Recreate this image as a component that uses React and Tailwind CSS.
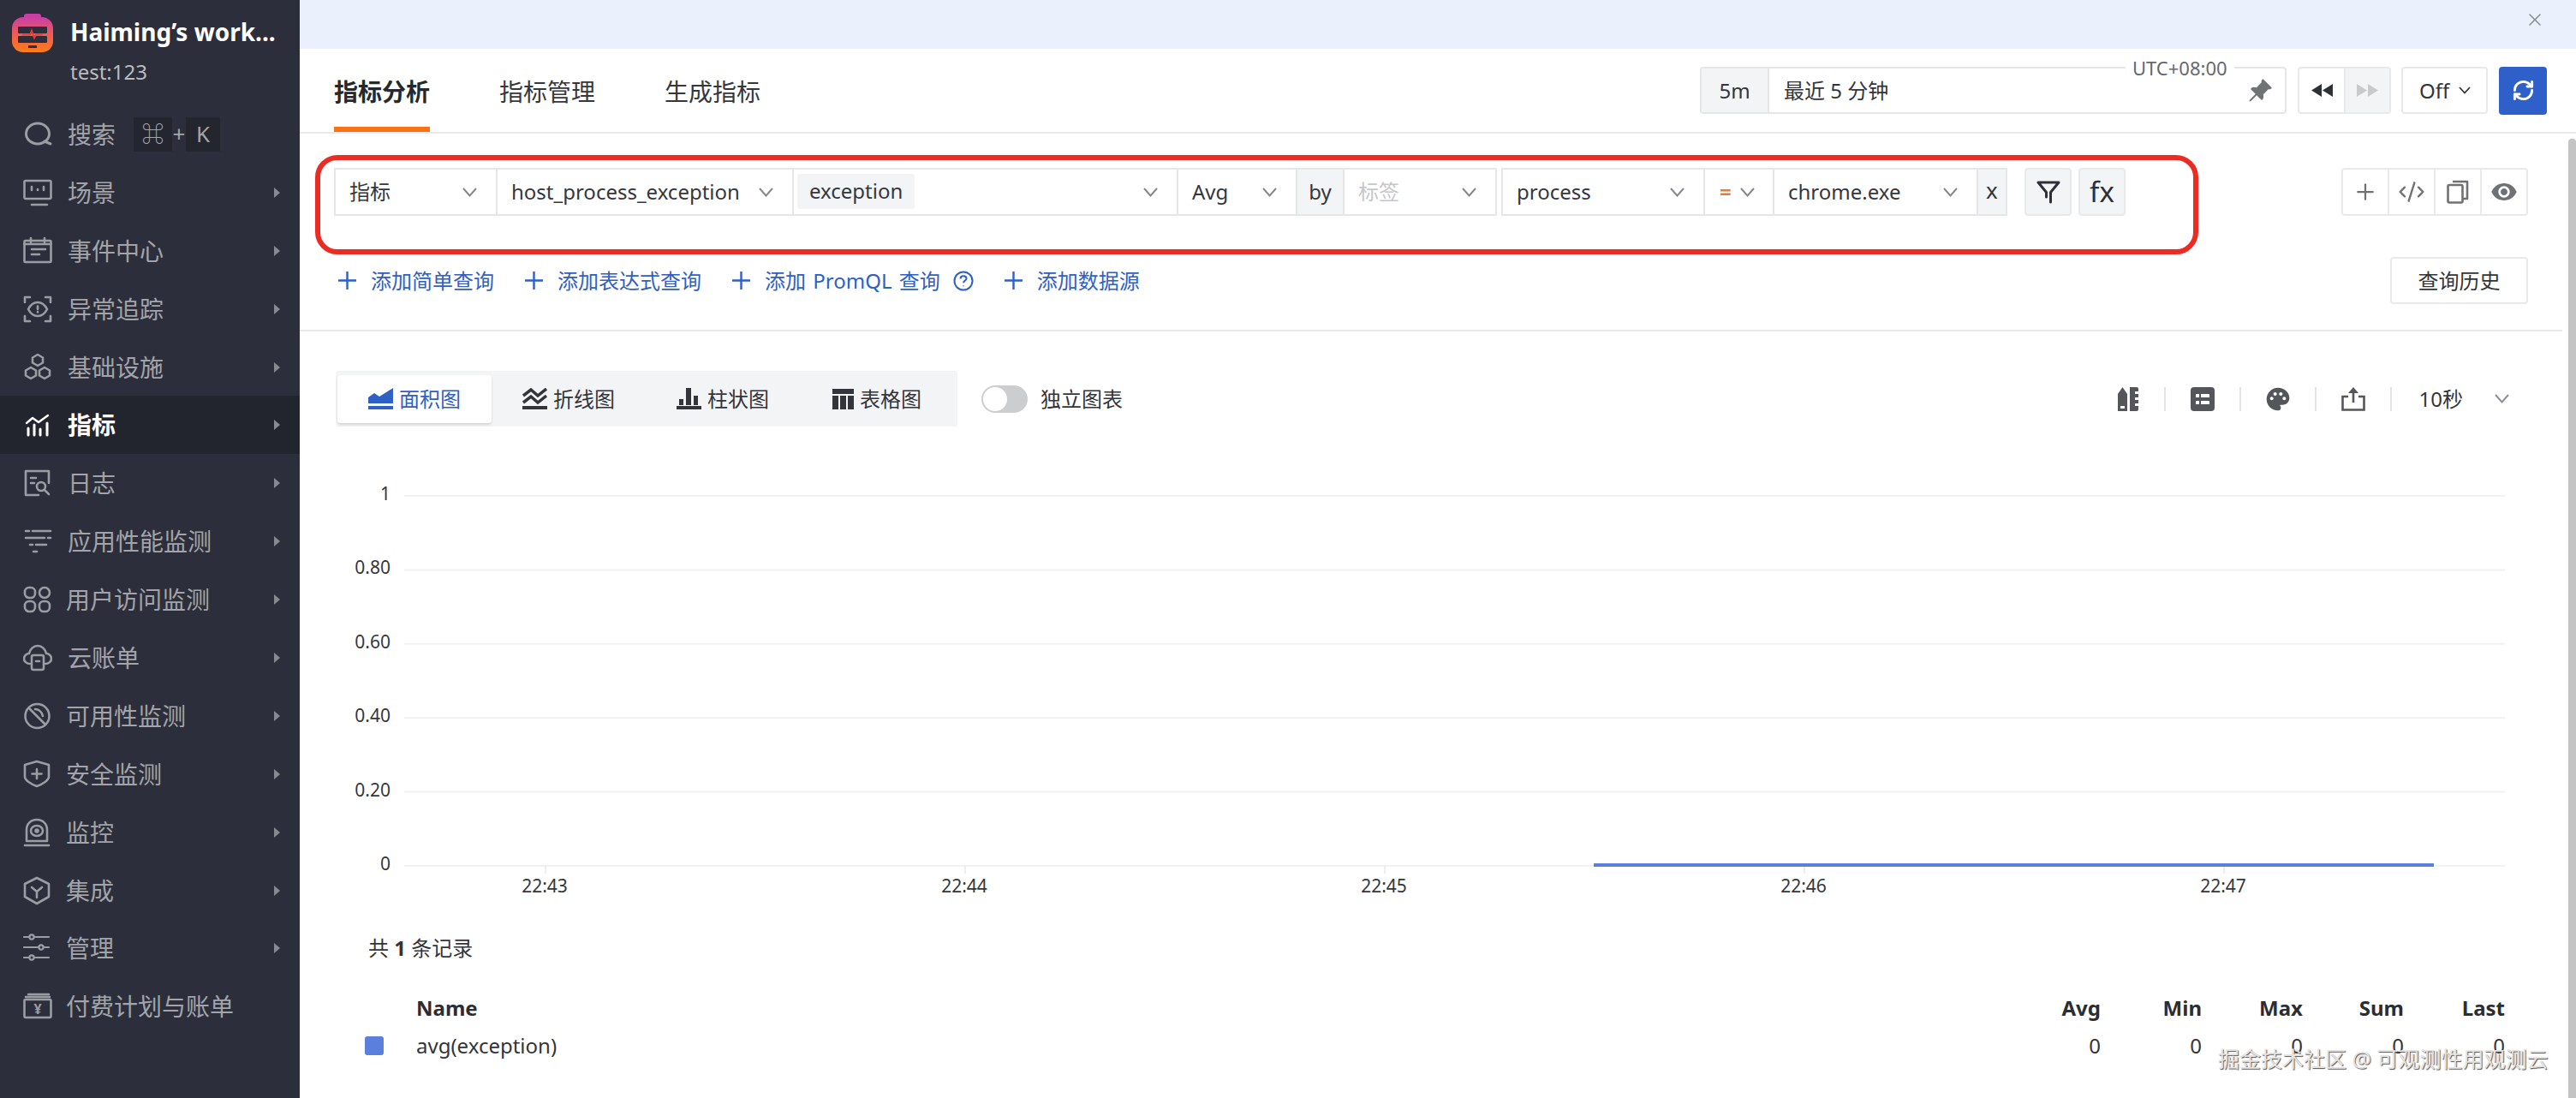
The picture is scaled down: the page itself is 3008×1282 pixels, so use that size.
import React from "react";
import { Plus, CodeXml, RefreshCw, X } from "lucide-react";
import { BsPinAngleFill } from "react-icons/bs";
import { MdVisibility, MdPalette } from "react-icons/md";

const I = ({ children, w = 34, h = 34, vb = "0 0 34 34", sw = 2.6 }) => (
  <svg width={w} height={h} viewBox={vb} fill="none" stroke="currentColor" strokeWidth={sw} strokeLinecap="round" strokeLinejoin="round">{children}</svg>
);

const icons = {
  search: <I sw={3}><ellipse cx="17" cy="16" rx="13.5" ry="12" /><path d="M25 25l7 3" /></I>,
  scene: <I><rect x="1.5" y="3" width="31" height="21" rx="1.5" /><path d="M10 31h18M10 10v4M24 10v4M17 13v1" /></I>,
  event: <I><rect x="1.5" y="5" width="31" height="25" rx="1" /><path d="M9 2v5M25 2v5M1.5 9h31M10 15h16M10 21h9" /></I>,
  anomaly: <I><path d="M2 9V3h6M26 3h6v6M2 25v6h6M32 25v6h-6" /><path d="M6 17c3-6 7-8 11-8s8 2 11 8c-3 6-7 8-11 8s-8-2-11-8z" /><path d="M17 13.5v3.5M17 20v.5" /></I>,
  infra: <I><path d="M17 2l6 3.5v6L17 15l-6-3.5v-6zM9 17l6 3.5v6L9 30l-6-3.5v-6zM25 17l6 3.500v6L25 30l-6-3.500v-6z" /></I>,
  metric: <I sw={3}><path d="M4 15l7-6 7 5 11-8" strokeWidth="2.4" /><path d="M6 21v8M13 17v12M20 22v7M28 15v14" /></I>,
  log: <I><path d="M18 31H3V3h27v14" /><path d="M9 11h6M9 17h4" /><circle cx="21" cy="21" r="5" /><path d="M25 25l5 5" /></I>,
  apm: <I><path d="M3 5h4M11 5h21M3 13h22M29 13h3M8 21h3M15 21h12M12 29h4" /></I>,
  rum: <I><rect x="2" y="3" width="12" height="12" rx="5" /><rect x="19" y="3" width="12" height="12" rx="6" /><rect x="2" y="19" width="12" height="12" rx="5" /><rect x="19" y="19" width="12" height="12" rx="5" /></I>,
  cloud: <I><path d="M8 24c-4 0-7-3-7-6s3-6 6-6c1-5 5-9 10-9s9 4 10 9c3 0 6 3 6 6s-3 6-7 6" /><rect x="10" y="14" width="14" height="17" rx="2" /><path d="M15 21h4" /></I>,
  avail: <I><circle cx="16.5" cy="17" r="14" /><path d="M7 8l19 19" /><path d="M14 9c4 0 8 3 9 8" /></I>,
  security: <I><path d="M16 2l14 4v14c0 4-8 9-14 11C10 29 2 24 2 20V6z" /><path d="M16 11v11M10.500 16.500h11" /></I>,
  monitor: <I><path d="M4 27V14C4 7 9 2 16 2s12 5 12 12v13z" /><ellipse cx="16" cy="15" rx="7" ry="6" /><circle cx="16" cy="15" r="1.500" /><path d="M2 32h28" /></I>,
  integ: <I><path d="M16 2l14 7v15l-14 8-14-8V9z" /><path d="M10 13l6 5 6-5M16 18v7" /></I>,
  manage: <I sw={2.2}><path d="M1 4h29M1 16h29M1 28h29" /><circle cx="10" cy="4" r="2.600" fill="#2c2f3b" /><circle cx="21" cy="16" r="2.600" fill="#2c2f3b" /><circle cx="10" cy="28" r="2.600" fill="#2c2f3b" /></I>,
  billing: <I><path d="M6 3h24M3 6h28" /><rect x="1.500" y="9" width="31" height="21" rx="1.500" /><text x="17" y="26" textAnchor="middle" fontSize="16" fontWeight="700" fill="currentColor" stroke="none">¥</text></I>,
};

const nav = [
  ["scene", "场景", "gap-[18px]"],
  ["event", "事件中心", "gap-[18px]"],
  ["anomaly", "异常追踪", "gap-[18px]"],
  ["infra", "基础设施", "gap-[18px]"],
  ["metric", "指标", "gap-[18px]", true],
  ["log", "日志", "gap-[18px]"],
  ["apm", "应用性能监测", "gap-[18px]"],
  ["rum", "用户访问监测", "gap-[16px]"],
  ["cloud", "云账单", "gap-[18px]"],
  ["avail", "可用性监测", "gap-[16px]"],
  ["security", "安全监测", "gap-[16px]"],
  ["monitor", "监控", "gap-[16px]"],
  ["integ", "集成", "gap-[16px]"],
  ["manage", "管理", "gap-[16px]"],
  ["billing", "付费计划与账单", "gap-[16px]", false, true],
];

const Logo = () => (
  <svg width="48" height="45" viewBox="0 0 48 45">
    <defs>
      <linearGradient id="lg" x1="0" y1="0" x2="0" y2="1">
        <stop offset="0" stopColor="#c93fa8" />
        <stop offset="0.55" stopColor="#f2604a" />
        <stop offset="1" stopColor="#ff7d17" />
      </linearGradient>
    </defs>
    <rect x="14" y="0" width="20" height="7" rx="3" fill="#c93fa8" />
    <rect x="0" y="4" width="48" height="41" rx="13" fill="url(#lg)" />
    <rect x="7" y="15" width="34" height="8" rx="1" fill="#2c2f3b" />
    <rect x="7" y="26" width="34" height="8" rx="1" fill="#2c2f3b" />
    <path d="M12 24.500h9l2-5 3 9 2-4h8" fill="none" stroke="#f0392f" strokeWidth="1.800" />
    <rect x="19" y="37" width="10" height="3" fill="#2c2f3b" />
  </svg>
);

const NavRow = ({ icon, label, gap, active, noArrow }) => (
  <div className={`h-[67.9px] flex items-center pl-[27px] pr-[23px] ${gap} ${active ? "bg-[#22252d] text-white font-bold" : "text-[#a2a4aa]"}`}>
    <span className={`w-[34px] h-[34px] flex items-center justify-center shrink-0 ${active ? "text-white" : "text-[#9b9da4]"}`}>{icons[icon]}</span>
    <span className="text-[28px] leading-[40px] whitespace-nowrap">{label}</span>
    {!noArrow && (
      <svg className="ml-auto" width="7" height="12" viewBox="0 0 7 12"><path d="M0 0l7 6-7 6z" fill="#878a92" /></svg>
    )}
  </div>
);

const Sidebar = () => (
  <aside className="w-[350px] shrink-0 bg-[#2c2f3b] h-full overflow-hidden">
    <div className="h-[123px] flex items-start pl-[14px] pt-[16px]">
      <Logo />
      <div className="ml-[20px]">
        <div className="text-[28px] leading-[40px] font-bold text-white whitespace-nowrap mt-[1px]">Haiming’s work...</div>
        <div className="text-[24px] leading-[34px] text-[#b9bbc0] mt-[10px]">test:123</div>
      </div>
    </div>
    <div className="h-[67.9px] flex items-center pl-[27px] gap-[18px] text-[#a2a4aa]">
      <span className="w-[34px] h-[34px] flex items-center justify-center text-[#9b9da4]">{icons.search}</span>
      <span className="text-[28px] leading-[40px] whitespace-nowrap">搜索</span>
      <div className="flex items-center ml-[3px] text-[26px]">
        <span className="w-[45px] h-[40px] bg-[#23262f] flex items-center justify-center">⌘</span>
        <span className="w-[16px] text-center">+</span>
        <span className="w-[40px] h-[40px] bg-[#23262f] flex items-center justify-center">K</span>
      </div>
    </div>
    {nav.map(([icon, label, gap, active, noArrow]) => (
      <NavRow key={label} icon={icon} label={label} gap={gap} active={active} noArrow={noArrow} />
    ))}
  </aside>
);

const Chev = ({ cls = "" }) => (
  <svg className={`shrink-0 ${cls}`} width="17" height="11" viewBox="0 0 17 11" fill="none" stroke="#85878c" strokeWidth="2"><path d="M1 1l7.500 8.500L16 1" /></svg>
);

const Cell = ({ w, children, cls = "", pl = "pl-[16px]" }) => (
  <div className={`${w} ${pl} ${cls} h-[56px] shrink-0 border-2 border-[#e5e6e8] -ml-[2px] first:ml-0 flex items-center pr-[22px] text-[24px] text-[#35373c] whitespace-nowrap bg-white`}>
    {children}
  </div>
);

const QueryRow = () => (
  <div className="flex items-center">
    <Cell w="w-[191px]"><span>指标</span><Chev cls="ml-auto" /></Cell>
    <Cell w="w-[348px]"><span>host_process_exception</span><Chev cls="ml-auto" /></Cell>
    <Cell w="w-[451px]" pl="pl-[4px]">
      <span className="h-[41px] px-[14px] bg-[#f3f4f6] rounded-[3px] flex items-center -mt-[2px]">exception</span>
      <Chev cls="ml-auto" />
    </Cell>
    <Cell w="w-[141px]"><span>Avg</span><Chev cls="ml-auto" /></Cell>
    <Cell w="w-[57px]" cls="!bg-[#f3f4f6] justify-center !pr-0" pl="pl-0">by</Cell>
    <Cell w="w-[180px]" cls="!text-[#c6c7c9]"><span>标签</span><Chev cls="ml-auto" /></Cell>
    <div className="w-[7px] shrink-0" />
    <Cell w="w-[238px]"><span>process</span><Chev cls="ml-auto" /></Cell>
    <Cell w="w-[83px]" cls="!pr-0" pl="pl-[17px]"><span className="text-[#e87c35] font-bold">=</span><Chev cls="ml-[10px]" /></Cell>
    <Cell w="w-[240px]"><span>chrome.exe</span><Chev cls="ml-auto" /></Cell>
    <Cell w="w-[36px]" cls="!bg-[#f3f4f6] justify-center !pr-0 !text-[26px]" pl="pl-0"><span className="leading-[28px] -mt-[4px]">x</span></Cell>
    <button className="ml-[20px] w-[55px] h-[56px] border-2 border-[#e8e9eb] bg-[#f3f4f6] rounded-[4px] flex items-center justify-center text-[#2d3036]">
      <svg width="28" height="28" viewBox="0 0 28 28" fill="none" stroke="currentColor" strokeWidth="3" strokeLinejoin="round" strokeLinecap="round"><path d="M2 3h24l-9.500 11.500V26M2 3l9.500 11.500V20" /></svg>
    </button>
    <button className="ml-[8px] w-[55px] h-[56px] border-2 border-[#e8e9eb] bg-[#f3f4f6] rounded-[4px] flex items-center justify-center text-[33px] leading-[40px] text-[#2d3036]">fx</button>
  </div>
);

const Tool = ({ children, cls = "" }) => (
  <div className={`w-[56px] h-[56px] border-2 border-[#e8e9eb] -ml-[2px] first:ml-0 first:rounded-l-[4px] last:rounded-r-[4px] flex items-center justify-center text-[#6f7174] ${cls}`}>{children}</div>
);

const AddLink = ({ label, help }) => (
  <div className="flex items-center text-[#2f60c4] text-[24px] whitespace-nowrap [word-spacing:2px]">
    <svg width="21" height="21" viewBox="0 0 21 21" fill="none" stroke="currentColor" strokeWidth="2.400"><path d="M10.500 0v21M0 10.500h21" /></svg>
    <span className="ml-[17px]">{label}</span>
    {help && (
      <svg className="ml-[15px]" width="24" height="24" viewBox="0 0 24 24" fill="none" stroke="currentColor" strokeWidth="2">
        <circle cx="12" cy="12" r="10.500" />
        <path d="M8.500 9.500c0-2 1.500-3.200 3.500-3.200s3.500 1.200 3.500 3c0 2.500-3.500 2.500-3.500 5" />
        <path d="M12 17.500v.8" />
      </svg>
    )}
  </div>
);

const AreaIcon = () => (
  <svg width="29" height="25" viewBox="0 0 29 25" fill="currentColor"><path d="M0 18V11l7-5 6 4 16-10v18z" /><rect y="21" width="29" height="4" /></svg>
);
const LineIcon = () => (
  <svg width="29" height="25" viewBox="0 0 29 25" fill="none" stroke="currentColor" strokeWidth="3.500"><path d="M1 9l9-7 8 7 10-8M1 17l9-7 8 7 10-8" /><rect x="0" y="21" width="29" height="4" fill="currentColor" stroke="none" /></svg>
);
const BarIcon = () => (
  <svg width="29" height="25" viewBox="0 0 29 25" fill="currentColor"><rect x="3" y="13" width="5" height="7" /><rect x="11" y="0" width="6" height="20" /><rect x="20" y="9" width="5" height="11" /><rect y="21" width="29" height="4" /></svg>
);
const TableIcon = () => (
  <svg width="25" height="24" viewBox="0 0 25 24" fill="currentColor"><rect width="25" height="6" /><rect y="8" width="7" height="16" /><rect x="9" y="8" width="7" height="16" /><rect x="18" y="8" width="7" height="16" /></svg>
);

const ChartTab = ({ icon, label, active }) => (
  <div className={`w-[180px] h-[56px] rounded-[4px] flex items-center justify-center gap-[7px] text-[24px] whitespace-nowrap ${active ? "bg-white text-[#2f60c4] shadow-[0_2px_3px_rgba(0,0,0,0.12)]" : "text-[#33353a]"}`}>
    {icon}
    <span>{label}</span>
  </div>
);

const Sep = () => <span className="w-[2px] h-[28px] bg-[#e3e4e6]" />;

const RulerIcon = () => (
  <svg width="25" height="28" viewBox="0 0 25 28" fill="#54565a"><path d="M0 28V8l5.500-8L11 8v20zM3 22v3h5v-3z" fillRule="evenodd" /><path d="M14 0h8a2 2 0 012 2v3h-4v3h4v4h-4v3h4v4h-4v3h4v4a2 2 0 01-2 2h-8z" /></svg>
);
const ListIcon = () => (
  <svg width="28" height="28" viewBox="0 0 28 28"><rect width="28" height="28" rx="4" fill="#54565a" /><path d="M6 8h4v4H6zM12 8h10v4H12zM6 16h4v4H6zM12 16h10v4H12z" fill="#fff" /></svg>
);
const ShareIcon = () => (
  <svg width="28" height="28" viewBox="0 0 28 28" fill="none"><path d="M8 11H1.500v15.500h25V11H20" stroke="#54565a" strokeWidth="2.600" /><path d="M14 18V4" stroke="#54565a" strokeWidth="2.600" /><path d="M14 0l6 7H8z" fill="#54565a" /></svg>
);
const CopyIcon = () => (
  <svg width="26" height="28" viewBox="0 0 26 28" fill="none" stroke="currentColor" strokeWidth="2.600" strokeLinejoin="round"><rect x="1.500" y="6" width="17" height="20.500" rx="1.500" /><path d="M7 2h17v20h-5" /></svg>
);

const ys = [579, 665.4, 751.8, 838.2, 924.6, 1011];
const yl = ["1", "0.80", "0.60", "0.40", "0.20", "0"];
const xs = [637, 1127, 1617, 2107, 2597];
const xl = ["22:43", "22:44", "22:45", "22:46", "22:47"];

const Chart = () => (
  <svg className="block mt-[62px]" width="2650" height="500" viewBox="350 560 2650 500" style={{ fontFamily: '"Noto Sans","Noto Sans CJK SC",sans-serif' }}>
    {ys.map((y, i) => (
      <g key={y}>
        <line x1="472" x2="2925" y1={y} y2={y} stroke="#f1f2f3" strokeWidth="2" />
        <text x="456" y={y + 5} textAnchor="end" fontSize="21" fill="#35373c">{yl[i]}</text>
      </g>
    ))}
    {xs.map((x, i) => (
      <g key={x}>
        <line x1={x} x2={x} y1="1011" y2="1020" stroke="#e8e9eb" strokeWidth="1.500" />
        <text x={x - 1} y="1042" textAnchor="middle" fontSize="21" fill="#35373c">{xl[i]}</text>
      </g>
    ))}
    <rect x="1861" y="1008" width="981" height="4" fill="#5b7fdc" />
  </svg>
);

const cols = ["Avg", "Min", "Max", "Sum", "Last"];

export default function App() {
  return (
    <div className="w-[3008px] h-[1282px] flex overflow-hidden bg-white relative" style={{ fontFamily: '"Noto Sans","Noto Sans CJK SC",sans-serif' }}>
      <Sidebar />
      <main className="flex-1 min-w-0 flex flex-col relative">
        <div className="h-[57px] shrink-0 bg-[#eaf1fd] flex items-start justify-end pr-[36px] pt-[11px] text-[#8b8e94]">
          <X size={24} strokeWidth={1.6} />
        </div>
        <div className="h-[99px] shrink-0 border-b-2 border-[#e8e9eb] flex pl-[40px] pr-[34px] text-[28px] text-[#35373c]">
          <div className="flex flex-col items-center mr-[81px]">
            <span className="mt-[30px] leading-[40px] font-bold text-[#26282d]">指标分析</span>
            <span className="mt-auto w-full h-[6px] bg-[#f97316]" />
          </div>
          <div className="mt-[30px] leading-[40px] mr-[81px]">指标管理</div>
          <div className="mt-[30px] leading-[40px]">生成指标</div>
          <div className="ml-auto flex items-center self-center text-[24px] text-[#33353a]">
            <div className="w-[685px] h-[55px] border-2 border-[#e5e6e8] rounded-[4px] flex items-center relative">
              <span className="w-[79px] h-full bg-[#f3f4f6] border-r-2 border-[#e5e6e8] flex items-center justify-center">5m</span>
              <span className="ml-[17px] whitespace-nowrap">最近 5 分钟</span>
              <span className="absolute left-[495px] -top-[15px] bg-white px-[8px] text-[22px] leading-[28px] text-[#66686c] whitespace-nowrap">UTC+08:00</span>
              <BsPinAngleFill className="ml-auto mr-[14px] text-[#707274]" size={30} />
            </div>
            <div className="ml-[13px] w-[109px] h-[55px] border-2 border-[#e8e9eb] rounded-[4px] flex overflow-hidden">
              <span className="w-[54px] border-r-2 border-[#e8e9eb] flex items-center justify-center">
                <svg width="25" height="15" viewBox="0 0 25 15" fill="#2c3136"><path d="M12 0v15L0 7.500zM25 0v15L13 7.500z" /></svg>
              </span>
              <span className="flex-1 bg-[#f3f4f6] flex items-center justify-center">
                <svg width="25" height="15" viewBox="0 0 25 15" fill="#c9cacc"><path d="M0 0v15l12-7.500zM13 0v15l12-7.500z" /></svg>
              </span>
            </div>
            <div className="ml-[12px] w-[101px] h-[55px] border-2 border-[#e8e9eb] rounded-[4px] flex items-center pl-[19px] gap-[11px]">
              <span>Off</span>
              <svg width="14" height="9" viewBox="0 0 14 9" fill="none" stroke="#33353a" strokeWidth="1.800"><path d="M1 1l6 6.500L13 1" /></svg>
            </div>
            <div className="ml-[13px] w-[56px] h-[56px] rounded-[4px] bg-[#2f5fc8] flex items-center justify-center text-white">
              <RefreshCw size={27} strokeWidth={2.6} />
            </div>
          </div>
        </div>

        <div className="flex-1 min-h-0 flex flex-col">
          <div className="flex items-start mt-[25px] pr-[56px]">
            <div className="ml-[18px] w-[2199px] h-[116px] border-[6px] border-[#ea2c24] rounded-[26px] pl-[16px] pt-[9px] shrink-0">
              <QueryRow />
            </div>
            <div className="ml-auto mt-[15px] flex">
              <Tool><Plus size={30} strokeWidth={1.8} /></Tool>
              <Tool><CodeXml size={32} strokeWidth={1.8} /></Tool>
              <Tool><CopyIcon /></Tool>
              <Tool><MdVisibility size={32} /></Tool>
            </div>
          </div>

          <div className="flex items-center mt-[3px] h-[55px] pl-[45px] pr-[56px] gap-[36px]">
            <AddLink label="添加简单查询" />
            <AddLink label="添加表达式查询" />
            <AddLink label="添加 PromQL 查询" help />
            <AddLink label="添加数据源" />
            <button className="ml-auto w-[161px] h-[55px] border-2 border-[#e8e9eb] rounded-[4px] text-[24px] text-[#33353a]">查询历史</button>
          </div>

          <div className="mt-[30px] h-[2px] bg-[#e9eaec] w-[2642px]" />

          <div className="mt-[46px] flex items-center pl-[42px] pr-[78px] h-[65px]">
            <div className="h-[65px] w-[726px] bg-[#f3f4f6] rounded-[3px] flex items-center pl-[2px]">
              <ChartTab active icon={<AreaIcon />} label="面积图" />
              <ChartTab icon={<LineIcon />} label="折线图" />
              <ChartTab icon={<BarIcon />} label="柱状图" />
              <ChartTab icon={<TableIcon />} label="表格图" />
            </div>
            <span className="ml-[28px] w-[54px] h-[32px] rounded-full bg-[#cccdcf] flex items-center pl-[2px]">
              <span className="w-[28px] h-[28px] rounded-full bg-white" />
            </span>
            <span className="ml-[15px] text-[24px] text-[#33353a] whitespace-nowrap">独立图表</span>
            <div className="ml-auto flex items-center gap-[29px] text-[#54565a]">
              <RulerIcon />
              <Sep />
              <ListIcon />
              <Sep />
              <MdPalette size={32} className="-mx-[2px]" />
              <Sep />
              <ShareIcon />
              <Sep />
              <span className="ml-[3px] text-[24px] text-[#33353a] whitespace-nowrap">10秒</span>
              <svg className="ml-[8px]" width="17" height="11" viewBox="0 0 17 11" fill="none" stroke="#8d8f93" strokeWidth="2"><path d="M1 1l7.500 8.500L16 1" /></svg>
            </div>
          </div>

          <Chart />

          <div className="mt-[30px] ml-[80px] text-[24px] leading-[34px] text-[#33353a]">共 <b>1</b> 条记录</div>

          <div className="mt-[36px] flex items-center text-[24px] leading-[34px] font-bold text-[#2b2d33] pl-[136px] pr-[83px]">
            <span>Name</span>
            <div className="ml-auto flex">
              {cols.map((c) => <span key={c} className="w-[118px] text-right">{c}</span>)}
            </div>
          </div>
          <div className="mt-[10px] flex items-center text-[24px] leading-[34px] text-[#33353a] pl-[76px] pr-[83px]">
            <span className="w-[22px] h-[22px] rounded-[3px] bg-[#5b7fdc] mr-[38px]" />
            <span>avg(exception)</span>
            <div className="ml-auto flex">
              {cols.map((c) => <span key={c} className="w-[118px] text-right">0</span>)}
            </div>
          </div>
        </div>

        <div className="absolute right-0 top-[162px] bottom-0 w-[9px] bg-[#c4c4c4] rounded-t-[4px]" />
      </main>
      <div className="absolute left-[2590px] top-[1218px] text-[25px] leading-[36px] whitespace-nowrap text-[#e4e4e4] [text-shadow:1px_1px_1px_#555]">掘金技术社区 @ 可观测性用观测云</div>
    </div>
  );
}
